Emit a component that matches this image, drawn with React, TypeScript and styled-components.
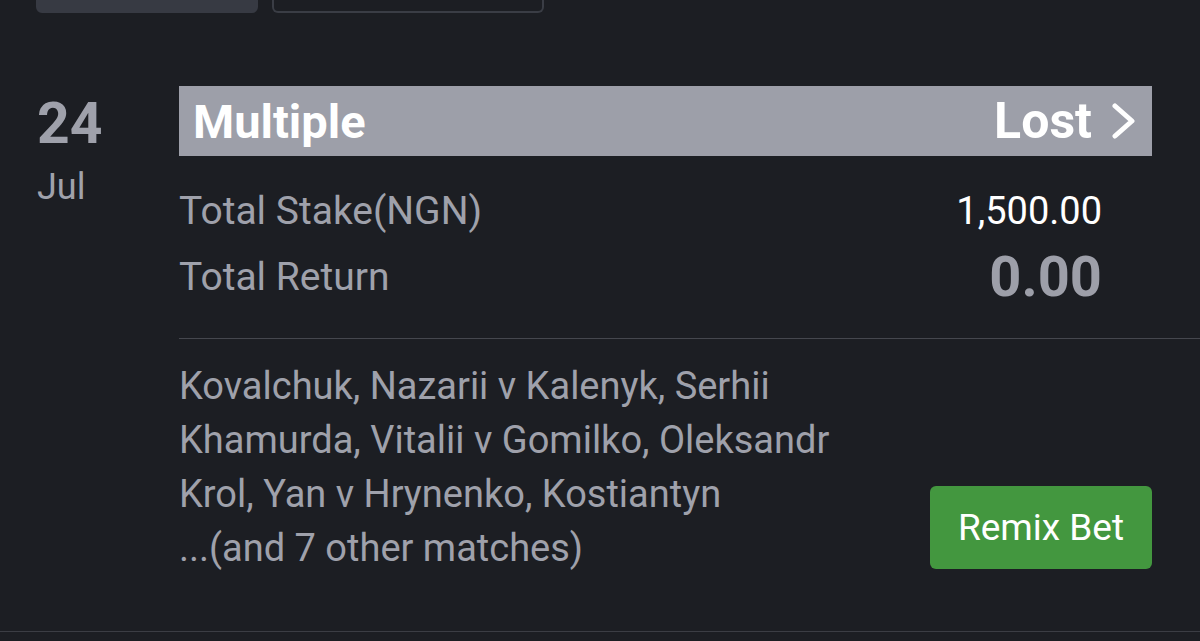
import React from 'react';
import styled, { createGlobalStyle } from 'styled-components';

const GlobalStyle = createGlobalStyle`
  html, body {
    margin: 0;
    padding: 0;
    background: #1c1e23;
  }
  body {
    font-family: Roboto, "Liberation Sans", sans-serif;
    overflow: hidden;
  }
`;

const Page = styled.div`
  width: 1200px;
  height: 641px;
  background: #1c1e23;
  overflow: hidden;
`;

const TabsRow = styled.div`
  display: flex;
  gap: 14px;
  padding-left: 36px;
  height: 13px;
`;

const Tab = styled.div<{ $active?: boolean }>`
  box-sizing: border-box;
  width: ${(p) => (p.$active ? '222px' : '272px')};
  height: 13px;
  border-radius: 0 0 6px 6px;
  background: ${(p) => (p.$active ? '#373a43' : 'transparent')};
  border: ${(p) => (p.$active ? 'none' : '2px solid #3a3d45')};
  border-top: none;
`;

const BetRow = styled.div`
  display: flex;
  margin-top: 73px;
  border-bottom: 1px solid #3b3d44;
  height: 545px;
`;

const DateCol = styled.div`
  width: 142px;
  padding-left: 37px;
  display: flex;
  flex-direction: column;
`;

const Day = styled.div`
  font-size: 57px;
  font-weight: 700;
  color: #9fa1ab;
  line-height: 1;
  margin-top: 9px;
`;

const Month = styled.div`
  font-size: 36px;
  color: #a0a2ab;
  margin-top: 17px;
  line-height: 1;
`;

const Content = styled.div`
  flex: 1;
  display: flex;
  flex-direction: column;
`;

const Header = styled.div`
  height: 70px;
  margin-right: 48px;
  background: #9d9fa9;
  display: flex;
  align-items: center;
  justify-content: space-between;
  padding: 0 16px 0 14px;
  color: #ffffff;
  font-weight: 700;
  font-size: 47px;
`;

const Status = styled.div`
  display: flex;
  align-items: center;
  gap: 20px;
  font-size: 50px;
`;

const SummaryRow = styled.div`
  display: flex;
  justify-content: space-between;
  align-items: center;
  padding-right: 98px;
  height: 66px;
  font-size: 39px;
  color: #9fa1ab;
`;

const Value = styled.span<{ $big?: boolean }>`
  color: ${(p) => (p.$big ? '#9d9fa9' : '#ffffff')};
  font-size: ${(p) => (p.$big ? '56px' : '38px')};
  font-weight: ${(p) => (p.$big ? 700 : 400)};
`;

const Divider = styled.div`
  height: 1px;
  background: #45474e;
  margin-top: 28px;
`;

const MatchesRow = styled.div`
  display: flex;
  justify-content: space-between;
  align-items: flex-end;
  padding: 20px 48px 0 0;
`;

const Matches = styled.div`
  width: 690px;
  font-size: 38px;
  line-height: 54px;
  color: #9fa1ab;
`;

const RemixButton = styled.button`
  width: 222px;
  height: 83px;
  margin-bottom: 6px;
  border: none;
  border-radius: 6px;
  background: #43973f;
  color: #ffffff;
  font-family: Roboto, "Liberation Sans", sans-serif;
  font-size: 37px;
`;

const Chevron = () => (
  <svg width="24" height="36" viewBox="0 0 24 36" fill="none">
    <path d="M3 3 L20 18 L3 33" stroke="#ffffff" strokeWidth="5" strokeLinecap="round" strokeLinejoin="round" />
  </svg>
);

export default function App() {
  return (
    <Page>
      <GlobalStyle />
      <TabsRow>
        <Tab $active />
        <Tab />
      </TabsRow>
      <BetRow>
        <DateCol>
          <Day>24</Day>
          <Month>Jul</Month>
        </DateCol>
        <Content>
          <Header>
            <span>Multiple</span>
            <Status>
              Lost
              <Chevron />
            </Status>
          </Header>
          <SummaryRow style={{ marginTop: '22px' }}>
            <span>Total Stake(NGN)</span>
            <Value>1,500.00</Value>
          </SummaryRow>
          <SummaryRow>
            <span>Total Return</span>
            <Value $big>0.00</Value>
          </SummaryRow>
          <Divider />
          <MatchesRow>
            <Matches>
              <div>
                Kovalchuk, Nazarii v Kalenyk, Serhii Khamurda, Vitalii v Gomilko, Oleksandr Krol, Yan v Hrynenko,
                Kostiantyn
              </div>
              <div>...(and 7 other matches)</div>
            </Matches>
            <RemixButton>Remix Bet</RemixButton>
          </MatchesRow>
        </Content>
      </BetRow>
    </Page>
  );
}
